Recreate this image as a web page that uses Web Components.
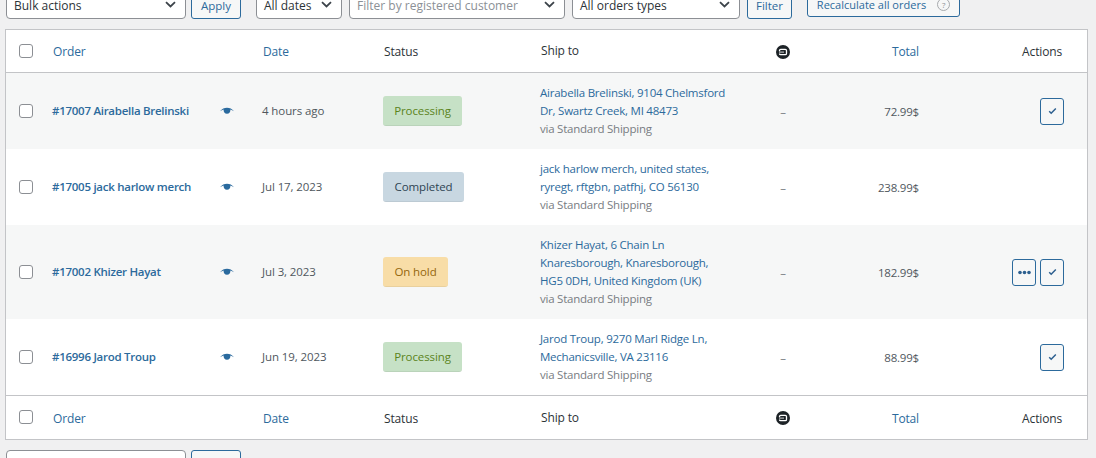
<!doctype html>
<html>
<head>
<meta charset="utf-8">
<title>Orders</title>
<style>
  html, body { margin: 0; height: 458px; overflow: hidden; background: #f0f0f1; }
  body { font-family: "Open Sans", "Liberation Sans", sans-serif; font-size: 12px; color: #50575e; }
</style>
</head>
<body>
<orders-page></orders-page>

<script>
const ICONS = {
  eye: `<svg width="14" height="8" viewBox="0 0 14 8"><path d="M0 4.300C2 1.800 4.400.7 7 .7s5 1.100 7 3.600c-1.300-.9-2.500-1.500-3.700-1.800a3.400 3.400 0 1 1-6.600 0C2.500 2.800 1.300 3.400 0 4.300z" fill="#2a6a9e"/></svg>`,
  origin: `<svg width="14" height="14" viewBox="0 0 14 14"><circle cx="7" cy="7" r="7" fill="#1d2327"/><path d="M3.500 6.300V5.600q0-1.200 1.200-1.200h4.600q1.200 0 1.200 1.200v2.800q0 1.200-1.200 1.200H4.700q-1.200 0-1.200-1.200" fill="none" stroke="#fff" stroke-width="1.300"/><path d="M3 7.100h5" stroke="#fff" stroke-width=".8"/></svg>`,
  check: `<svg width="9" height="8" viewBox="0 0 9 8"><path d="M1.200 4.200l2 2L7.800 1.400" fill="none" stroke="#2c5f8f" stroke-width="1.500"/></svg>`,
  dots: `<svg width="13" height="5" viewBox="0 0 13 5"><circle cx="2" cy="2.500" r="1.800" fill="#2c5f8f"/><circle cx="6.500" cy="2.500" r="1.800" fill="#2c5f8f"/><circle cx="11" cy="2.500" r="1.800" fill="#2c5f8f"/></svg>`,
  chevron: `<svg width="11" height="7" viewBox="0 0 11 7"><path d="M1 1.200l4.500 4.200L10 1.200" fill="none" stroke="#3c434a" stroke-width="1.800"/></svg>`
}

// Builds a class whose shadow root is just the given styles and markup
function simpleElement(tag, css, html) {
  customElements.define(tag, class extends HTMLElement {
    constructor() {
      super()
      this.attachShadow({ mode: 'open' }).innerHTML = `<style>${css}</style>${html}`
    }
  })
}

simpleElement('wc-select', `
  :host { display: flex; align-items: center; justify-content: space-between; box-sizing: border-box;
    width: var(--w, 180px); height: 30px; padding: 2px 9px 0 7px; background: #fff; border: 1px solid #8c8f94;
    border-radius: 4px; font-size: 12px; color: #2c3338; white-space: nowrap; }
  :host([placeholder]) { color: #8b9096; }
  svg { flex: none; margin-top: -2px; }
`, `<slot></slot>${ICONS.chevron}`)

simpleElement('wc-button', `
  :host { display: flex; align-items: center; justify-content: center; box-sizing: border-box; height: 30px;
    padding-top: 2px; background: #f6f7f7; border: 1px solid #2c6a9c; border-radius: 3px; font-size: 11.500px;
    color: #2c6a9c; white-space: nowrap; }
`, `<slot></slot>`)

simpleElement('wc-check', `
  :host { display: block; box-sizing: border-box; width: 14px; height: 14px; background: #fff;
    border: 1px solid #8c8f94; border-radius: 3px; }
`, ``)

simpleElement('status-badge', `
  :host { display: flex; align-items: center; justify-content: center; box-sizing: border-box; height: 30px;
    border-radius: 3px; border-bottom: 1px solid rgba(0,0,0,.06); font-size: 11.500px; letter-spacing: -.1px; white-space: nowrap; }
  :host([type=processing]) { width: 79px; background: #c6e1c6; color: #5b841b; }
  :host([type=completed]) { width: 81px; background: #c8d7e1; color: #2e4453; }
  :host([type=hold]) { width: 65px; background: #f8dda7; color: #94660c; }
`, `<slot></slot>`)

simpleElement('action-button', `
  :host { display: flex; align-items: center; justify-content: center; box-sizing: border-box; width: 24px; height: 27px;
    background: #f6f7f7; border: 1px solid #2c6a9c; border-radius: 3px; }
`, `<slot></slot>`)

const GRID = `display: grid; grid-template-columns: 46px 210px 121px 157px 210px 66px 103px 1fr; align-items: center;`

class OrdersHead extends HTMLElement {
  constructor() {
    super()
    this.attachShadow({ mode: 'open' }).innerHTML = `
      <style>
        :host { ${GRID} box-sizing: border-box; height: 43px; padding-top: 1px; font-size: 12px; letter-spacing: -.15px; color: #2c3338; background: #fff; }
        .check { padding-left: 13px; margin-top: -2px; }
        .link { color: #2c6a9c; }
        .order { padding-left: 1px; }
        .col { padding-left: 1px; }
        .ship { padding-left: 1px; margin-top: -2px; }
        .origin { justify-self: center; height: 14px; }
        .total { justify-self: end; }
        .actions { justify-self: end; padding-right: 25px; }
      </style>
      <div class="check"><wc-check></wc-check></div>
      <div class="order link">Order</div>
      <div class="col link">Date</div>
      <div class="col">Status</div>
      <div class="ship">Ship to</div>
      <div class="origin">${ICONS.origin}</div>
      <div class="total link">Total</div>
      <div class="actions">Actions</div>`
  }
}
customElements.define('orders-head', OrdersHead)

class OrderRow extends HTMLElement {
  constructor() {
    super()
    this.attachShadow({ mode: 'open' })
  }

  connectedCallback() {
    const a = name => this.getAttribute(name) || ''
    const actions = a('actions').split(' ').filter(Boolean)
      .map(name => `<action-button>${ICONS[name]}</action-button>`).join('')
    this.shadowRoot.innerHTML = `
      <style>
        :host { ${GRID} height: var(--h, 76px); background: #fff; font-size: 11.500px; }
        :host([alt]) { background: #f6f7f7; }
        .check { padding-left: 13px; }
        .name { display: flex; justify-content: space-between; align-items: center; padding-right: 28px; margin-top: -1px;
          color: #2c6a9c; font-weight: 600; letter-spacing: -.27px; white-space: nowrap; }
        .date { letter-spacing: -.1px; margin-top: -1px; }
        .ship { line-height: 18px; color: #2c6a9c; letter-spacing: -.23px; }
        .via { color: #787c82; }
        .dash { justify-self: center; color: #787c82; }
        .total { justify-self: end; letter-spacing: -.2px; }
        .actions { display: flex; justify-content: flex-end; gap: 4px; padding-right: 23px; }
      </style>
      <div class="check"><wc-check></wc-check></div>
      <div class="name"><span>${a('order')}</span>${ICONS.eye}</div>
      <div class="date">${a('date')}</div>
      <div><status-badge type="${a('status')}">${a('label')}</status-badge></div>
      <div class="ship"><slot></slot><div class="via">via Standard Shipping</div></div>
      <div class="dash">–</div>
      <div class="total">${a('total')}</div>
      <div class="actions">${actions}</div>`
  }
}
customElements.define('order-row', OrderRow)

simpleElement('orders-table', `
  :host { display: block; margin: 10px 8px 0 5px; background: #fff; border: 1px solid #c3c4c7; }
  ::slotted(orders-head:first-of-type) { border-bottom: 1px solid #c3c4c7; }
  ::slotted(orders-head:last-of-type) { height: 44px; border-top: 1px solid #c3c4c7; }
`, `<slot></slot>`)

class OrdersPage extends HTMLElement {
  constructor() {
    super()
    this.attachShadow({ mode: 'open' }).innerHTML = `
      <style>
        :host { display: block; margin-top: -11px; }
        .bar { display: flex; align-items: flex-start; padding-left: 6px; }
        .bottom { margin-top: 10px; }
        .apply { width: 50px; margin-left: 5px; }
        .dates { --w: 86px; margin-left: 15px; }
        .customer { --w: 216px; margin-left: 7px; }
        .types { --w: 168px; margin-left: 7px; }
        .filter { width: 45px; margin-left: 7px; }
        .recalc { width: 153px; height: 28px; margin-left: 15px; font-size: 11px; gap: 11px; }
        .help { display: inline-flex; align-items: center; justify-content: center; box-sizing: border-box;
          width: 13px; height: 13px; border: 1px solid #a7aaad; border-radius: 50%; font-size: 8px; color: #8c8f94; }
      </style>
      <div class="bar">
        <wc-select>Bulk actions</wc-select>
        <wc-button class="apply">Apply</wc-button>
        <wc-select class="dates">All dates</wc-select>
        <wc-select class="customer" placeholder>Filter by registered customer</wc-select>
        <wc-select class="types">All orders types</wc-select>
        <wc-button class="filter">Filter</wc-button>
        <wc-button class="recalc"><span>Recalculate all orders</span> <span class="help">?</span></wc-button>
      </div>
      <orders-table>
        <orders-head></orders-head>
        <order-row alt order="#17007 Airabella Brelinski" date="4 hours ago" status="processing" label="Processing" total="72.99$" actions="check">Airabella Brelinski, 9104 Chelmsford<br>Dr, Swartz Creek, MI 48473</order-row>
        <order-row order="#17005 jack harlow merch" date="Jul 17, 2023" status="completed" label="Completed" total="238.99$">jack harlow merch, united states,<br>ryregt, rftgbn, patfhj, CO 56130</order-row>
        <order-row alt style="--h: 94px" order="#17002 Khizer Hayat" date="Jul 3, 2023" status="hold" label="On hold" total="182.99$" actions="dots check">Khizer Hayat, 6 Chain Ln<br>Knaresborough, Knaresborough,<br>HG5 0DH, United Kingdom (UK)</order-row>
        <order-row order="#16996 Jarod Troup" date="Jun 19, 2023" status="processing" label="Processing" total="88.99$" actions="check">Jarod Troup, 9270 Marl Ridge Ln,<br>Mechanicsville, VA 23116</order-row>
        <orders-head></orders-head>
      </orders-table>
      <div class="bar bottom">
        <wc-select>Bulk actions</wc-select>
        <wc-button class="apply">Apply</wc-button>
      </div>`
  }
}
customElements.define('orders-page', OrdersPage)
</script>
</body>
</html>
